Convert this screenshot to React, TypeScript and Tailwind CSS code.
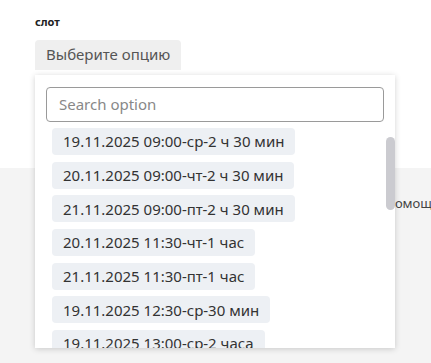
const options = [
  "19.11.2025 09:00-ср-2 ч 30 мин",
  "20.11.2025 09:00-чт-2 ч 30 мин",
  "21.11.2025 09:00-пт-2 ч 30 мин",
  "20.11.2025 11:30-чт-1 час",
  "21.11.2025 11:30-пт-1 час",
  "19.11.2025 12:30-ср-30 мин",
  "19.11.2025 13:00-ср-2 часа",
  "20.11.2025 13:00-чт-2 часа",
]

export default function App() {
  return (
    <div className="relative h-[363px] w-[431px] overflow-hidden bg-[#f4f4f4] font-['Noto_Sans',sans-serif]">
      <div className="h-[168px] bg-white px-[35px] pt-[14px]">
        <div className="text-[11px] font-bold text-[#222]">слот</div>
        <div className="mt-[9px] inline-flex h-[30px] items-center rounded-t-[4px] bg-[#efefef] px-[11px] text-[15px] text-[#555]">
          Выберите опцию
        </div>
      </div>
      <div className="pt-[26px] pl-[387px] text-[13px] whitespace-nowrap text-[#444]">помощь и поддержка</div>

      <div className="absolute top-[75px] left-[35px] flex h-[273px] w-[360px] flex-col bg-white shadow-[0_1px_6px_rgba(0,0,0,0.18)]">
        <div className="px-[11px] pt-[12px]">
          <div className="flex h-[35px] items-center rounded-[4px] border border-[#9a9a9a] px-[12px] text-[15px] text-[#888]">
            Search option
          </div>
        </div>
        <div className="relative mt-[6px] flex-1 overflow-hidden">
          <div className="flex flex-col items-start gap-[6.7px] pl-[17px]">
            {options.map((o) => (
              <div key={o} className="flex h-[27px] items-center rounded-[4px] bg-[#edf0f4] px-[11px] text-[15px] whitespace-nowrap text-[#333]">
                {o}
              </div>
            ))}
          </div>
          <div className="absolute top-[9px] right-0 h-[73px] w-[9px] rounded-full bg-[#cbcbd0]" />
        </div>
      </div>
    </div>
  )
}
